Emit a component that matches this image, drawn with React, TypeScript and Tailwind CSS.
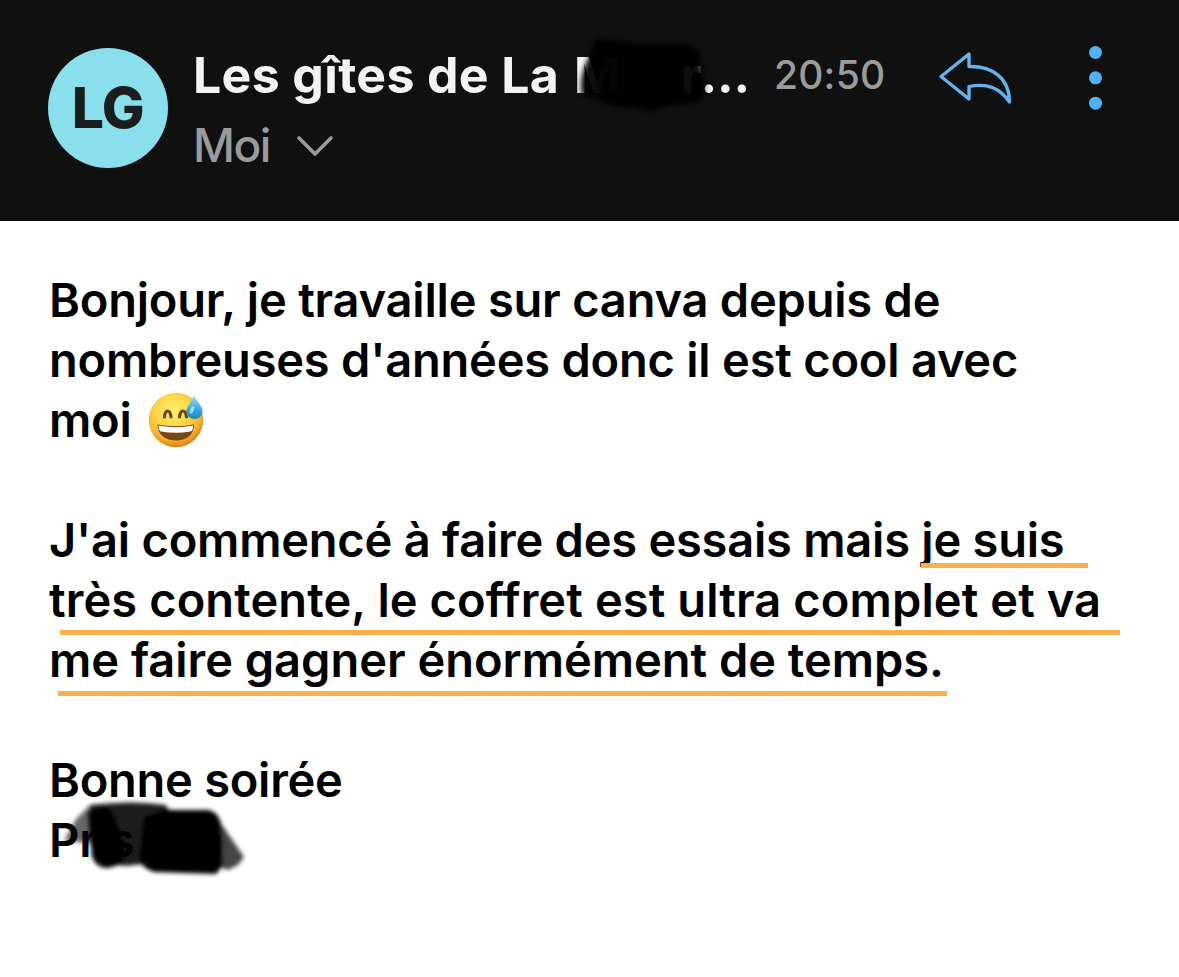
const body = [
    { text: "Bonjour, je travaille sur canva depuis de", className: "tracking-[-0.2px]" },
    { text: "nombreuses d'années donc il est cool avec", className: "tracking-[-0.22px]" },
    { text: "moi", className: "tracking-[-0.2px]", emoji: true },
    { text: "", className: "" },
    { text: "J'ai commencé à faire des essais mais je suis", className: "tracking-[-0.23px]", underline: "left-[872px] top-[53px] w-[167px]" },
    { text: "très contente, le coffret est ultra complet et va", className: "tracking-[0.1px]", underline: "left-[11px] top-[60px] w-[1060px]" },
    { text: "me faire gagner énormément de temps.", className: "tracking-[-0.02px]", underline: "left-[9px] top-[61px] w-[889px]" },
    { text: "", className: "" },
    { text: "Bonne soirée", className: "tracking-[-0.26px]" },
];

const SweatSmile = () => (
    <svg viewBox="0 0 56 56" className="absolute left-[99px] top-[2px] size-14">
        <defs>
            <radialGradient id="face" cx="44%" cy="34%" r="64%">
                <stop offset="0" stopColor="#fff06a" />
                <stop offset="0.5" stopColor="#fdd545" />
                <stop offset="0.8" stopColor="#f9b52c" />
                <stop offset="1" stopColor="#de8a1c" />
            </radialGradient>
            <linearGradient id="drop" x1="0" y1="0" x2="0" y2="1">
                <stop offset="0" stopColor="#a5dcf5" />
                <stop offset="0.6" stopColor="#35a8e0" />
                <stop offset="1" stopColor="#1c86c8" />
            </linearGradient>
        </defs>
        <circle cx="28" cy="28" r="27.2" fill="url(#face)" />
        <path d="M16.500 25C17 17 22 17 23 25M31.500 25C32.500 17 37.500 17 38.500 25" fill="none" stroke="#704414" strokeWidth="3.200" strokeLinecap="round" />
        <path d="M9.500 32.500Q28 36 46 32.500C46 43 38 48.500 28 48.500S9.500 43 9.500 32.500Z" fill="#7a4515" />
        <path d="M10.500 33.500Q28 37 45 33.500Q45.500 38.500 42.500 39.500Q28 42 13 39.500Q10.500 38.500 10.500 33.500Z" fill="#fff" />
        <path d="M46 3C43.500 10 38.500 14.500 38.500 19.500C38.500 24 42 27 46.500 27S54.500 24 54.500 19C54.500 14 48.500 10 46 3Z" fill="url(#drop)" />
        <ellipse cx="44" cy="18" rx="1.700" ry="4" transform="rotate(20 44 18)" fill="#c8eefc" opacity=".75" />
    </svg>
);

const Header = () => (
    <header className="flex h-[221px] items-start bg-[#101010] pl-12">
        <div className="mt-12 flex size-[120px] shrink-0 items-center justify-center rounded-full bg-[#89dfeb] text-[57px] font-extrabold text-[#1a1d1e]">
            <span className="tracking-[-0.5px]">LG</span>
        </div>
        <div className="ml-[25px] mt-[45px] w-[581px] shrink-0">
            <div className="relative flex h-[60px] whitespace-pre text-[50px] leading-[60px] font-bold text-[#f3f3f3]">
                <span className="w-[381px] tracking-[0.35px]">Les gîtes de La</span>
                <span className="w-[107px]">M</span>
                <span>r</span>
                <span className="ml-[-1px] tracking-[-0.1px]">...</span>
                {/* marker strokes over the sender name */}
                <svg viewBox="0 0 140 90" className="absolute left-[381px] top-[-13px] h-[90px] w-[140px]">
                    <defs>
                        <filter id="soft-name" x="-20%" y="-20%" width="140%" height="140%">
                            <feGaussianBlur stdDeviation="2.500" />
                        </filter>
                    </defs>
                    <path d="M22 7L60 12L102 12Q122 11 126 23L130 51Q132 69 120 71L94 74L76 79L60 75L39 74L24 67L8 63Q4 47 14 27Z" fill="#000" opacity=".94" filter="url(#soft-name)" />
                    <path d="M30 14H98V70H42L24 58Z" fill="#000" opacity=".6" filter="url(#soft-name)" />
                </svg>
            </div>
            <div className="mt-[10px] flex h-[60px] items-center text-[46px] leading-[60px] text-[#9b9b9b]">
                <span className="font-medium tracking-[-1.5px]">Moi</span>
                <svg viewBox="0 0 40 24" className="ml-[25px] mt-[2px] h-6 w-10" fill="none" stroke="#9b9b9b" strokeWidth="3.600" strokeLinecap="round" strokeLinejoin="round">
                    <path d="M4 4L20 20L36 4" />
                </svg>
            </div>
        </div>
        <span className="mt-[45px] w-[164px] shrink-0 text-[39px] leading-[60px] font-medium tracking-[0.2px] text-[#9b9b9b]">20:50</span>
        <svg viewBox="0 0 76 56" className="mt-[50px] h-14 w-[76px] shrink-0" fill="none" stroke="#62b5f0" strokeWidth="3.300" strokeLinejoin="round">
            <path d="M3 26.500L31 4V16.500C55 16 71.500 28.500 71.500 52C62 38 50 33 31 36.500V49Z" />
        </svg>
        <svg viewBox="0 0 14 66" className="ml-[74px] mt-[45px] h-[66px] w-[14px] shrink-0" fill="#4fb2fb">
            <circle cx="7.500" cy="7.500" r="6.500" />
            <circle cx="7.500" cy="32.800" r="6.500" />
            <circle cx="7.500" cy="58.200" r="6.500" />
        </svg>
    </header>
);

export default function App() {
    return (
        <div className="h-[977px] w-[1179px] overflow-hidden bg-white font-['Inter',sans-serif]">
            <Header />
            <main className="pl-[49px] pt-[49px] text-[47px] leading-[60px] font-[560] text-black">
                {body.map((line, i) => (
                    <p key={i} className="relative h-[60px] whitespace-pre">
                        <span className={line.className}>{line.text}</span>
                        {line.underline && <span className={`absolute h-[5px] bg-[#f9b14b] ${line.underline}`} />}
                        {line.emoji && <SweatSmile />}
                    </p>
                ))}
                <div className="relative flex h-[60px] whitespace-pre">
                    <span className="z-10 w-[60px]">Pr</span>
                    <span className="z-10 w-[87px]">s</span>
                    <span className="z-10">a</span>
                    {/* marker strokes over the signature */}
                    <svg viewBox="0 0 200 90" className="absolute left-[11px] top-[-15px] h-[90px] w-[200px]">
                        <defs>
                            <filter id="soft-sign" x="-20%" y="-20%" width="140%" height="140%">
                                <feGaussianBlur stdDeviation="2" />
                            </filter>
                        </defs>
                        <g filter="url(#soft-sign)">
                            <path d="M4 46L16 24L30 10L60 8L60 50L30 48L5 46Z" fill="#000" opacity=".6" />
                            <path d="M30 10Q72 5 106 10L114 24V66L64 71L34 62Z" fill="#1e1e1e" />
                            <path d="M150 22L162 30L173 46L184 62L178 70L168 75L158 71L146 62Z" fill="#444" />
                            <path d="M28 18Q42 7 52 16L60 36L66 58L62 69L52 72Q38 76 32 62Z" fill="#000" />
                            <path d="M84 22L104 15H148Q160 17 162 34L163 70L156 79L94 77Q82 73 79 64Z" fill="#000" />
                        </g>
                    </svg>
                </div>
            </main>
        </div>
    );
}
